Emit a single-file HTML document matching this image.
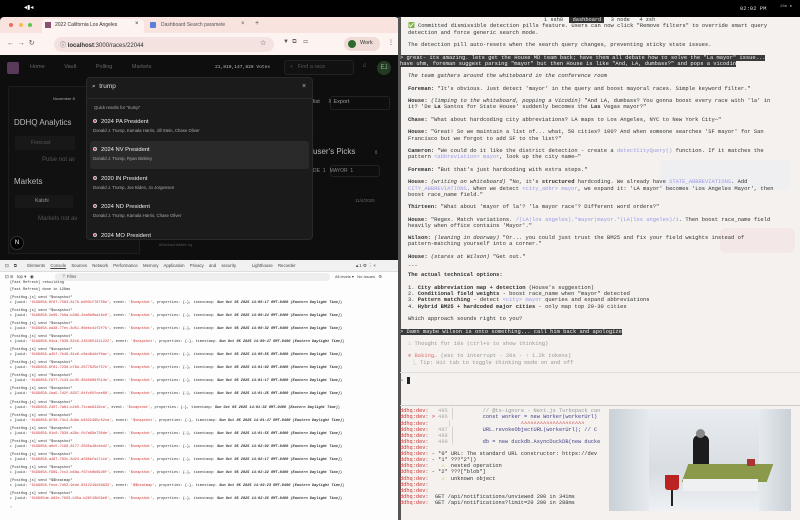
<!DOCTYPE html>
<html><head><meta charset="utf-8"><style>
*{margin:0;padding:0;box-sizing:border-box}
body{width:800px;height:520px;overflow:hidden;background:#000;font-family:"Liberation Sans",sans-serif;position:relative}
.a{position:absolute;white-space:nowrap}
.m{font-family:"Liberation Mono",monospace}
.t{font-family:"Liberation Mono",monospace;font-size:5.45px;color:#333;position:absolute;left:408px;white-space:nowrap;line-height:6px;z-index:2}
.b{font-weight:bold}
.i{font-style:italic}
.c{color:#9a9ae8}
.hl{background:#3a3a3a;color:#eee}
.lg{position:absolute;left:10px;font-family:"Liberation Mono",monospace;font-size:3.6px;white-space:nowrap;color:#333}
.lk{position:absolute;right:12px;font-size:3.6px;color:#c33;text-decoration:underline;font-family:"Liberation Mono",monospace}
.it{position:absolute;left:92px;color:#eee;font-size:5.8px}
.it small{display:block;color:#aaa;font-size:4.3px;margin-top:3px}
.dot{display:inline-block;width:4px;height:4px;border-radius:50%;background:#a33;border:1px solid #ccd;margin-right:4px;vertical-align:middle}
.dd{position:absolute;left:400px;font-family:"Liberation Mono",monospace;font-size:5.3px;color:#c33;white-space:nowrap}
</style></head><body>
<!-- top bar -->
<div class="a" style="left:24px;top:4px;color:#fff;font-size:6px">◂▮◂</div>
<div class="a m" style="left:740px;top:5px;color:#ddd;font-size:5.5px">02:02 PM</div>
<div class="a m" style="left:780px;top:5px;color:#99a;font-size:4px">26m ●</div>

<!-- browser -->
<div class="a" style="left:0;top:17px;width:399px;height:38px;background:#f8e3df;border-radius:4px 4px 0 0"></div>
<div class="a" style="left:9px;top:23px;width:4px;height:4px;border-radius:50%;background:#ed6a5e"></div>
<div class="a" style="left:19px;top:23px;width:4px;height:4px;border-radius:50%;background:#f5bf4f"></div>
<div class="a" style="left:28px;top:23px;width:4px;height:4px;border-radius:50%;background:#61c554"></div>
<div class="a" style="left:42px;top:19px;width:102px;height:14px;background:#fdf3f1;border-radius:4px 4px 0 0"></div>
<div class="a" style="left:45px;top:22px;width:6px;height:6px;background:#8a5070"></div>
<div class="a" style="left:55px;top:22px;font-size:5px;color:#333">2022 California Los Angeles</div>
<div class="a" style="left:135px;top:21px;font-size:6px;color:#333">×</div>
<div class="a" style="left:150px;top:22px;width:6px;height:6px;background:#5b7fd8;border-radius:1px"></div>
<div class="a" style="left:161px;top:22px;font-size:5px;color:#555">Dashboard Search paramete</div>
<div class="a" style="left:241px;top:21px;font-size:6px;color:#555">×</div>
<div class="a" style="left:255px;top:20px;font-size:7px;color:#555">+</div>
<div class="a" style="left:0;top:33px;width:399px;height:22px;background:#fdf3f1"></div>
<div class="a" style="left:7px;top:39px;font-size:7px;color:#555">← &nbsp;→ &nbsp;↻</div>
<div class="a" style="left:54px;top:37px;width:220px;height:15px;background:#f3e2df;border-radius:8px"></div>
<div class="a" style="left:60px;top:40px;font-size:6px;color:#333">ⓘ <b>localhost</b>:3000/races/22044</div>
<div class="a" style="left:260px;top:39px;font-size:7px;color:#444">☆</div>
<div class="a" style="left:283px;top:39px;font-size:6px;color:#555">▼ &nbsp;⧉ &nbsp; &nbsp;▭</div>
<div class="a" style="left:344px;top:37px;width:36px;height:14px;background:#f0dcd6;border-radius:7px"></div>
<div class="a" style="left:348px;top:40px;width:8px;height:8px;border-radius:50%;background:#2e6a2e"></div>
<div class="a" style="left:360px;top:40px;font-size:5.5px;color:#333">Work</div>
<div class="a" style="left:388px;top:39px;font-size:6px;color:#333">⋮</div>

<!-- app -->
<div class="a" style="left:0;top:55px;width:399px;height:205px;background:#0e0e0e"></div>
<div class="a" style="left:7px;top:62px;width:12px;height:12px;background:#5a3a5a;border-radius:2px"></div>
<div class="a" style="left:30px;top:64px;font-size:5.5px;color:#666;word-spacing:18px">Home Vault Polling Markets</div>
<div class="a m" style="left:215px;top:65px;font-size:4.6px;color:#bbb">21,810,147,828 Votes</div>
<div class="a" style="left:284px;top:60px;width:70px;height:15px;border:1px solid #222;border-radius:3px;background:#111"></div>
<div class="a" style="left:290px;top:64px;font-size:5.5px;color:#555">⌕ &nbsp; Find a race</div>
<div class="a" style="left:362px;top:63px;font-size:6px;color:#666">♫</div>
<div class="a" style="left:377px;top:61px;width:14px;height:14px;border-radius:50%;background:#243a24;color:#8b8;font-size:6px;text-align:center;line-height:14px">EJ</div>
<div class="a" style="left:8px;top:86px;width:132px;height:168px;border:1px solid #1d1d1d;background:#111"></div>
<div class="a" style="left:53px;top:96px;font-size:4px;color:#aaa">November 8</div>
<div class="a" style="left:14px;top:118px;font-size:8px;color:#bbb">DDHQ Analytics</div>
<div class="a" style="left:15px;top:136px;width:60px;height:14px;background:#181818"></div>
<div class="a" style="left:31px;top:140px;font-size:5px;color:#555">Forecast</div>
<div class="a" style="left:42px;top:157px;font-size:6px;color:#555">Pulse not av</div>
<div class="a" style="left:14px;top:177px;font-size:8px;color:#bbb">Markets</div>
<div class="a" style="left:15px;top:195px;width:58px;height:13px;background:#181818"></div>
<div class="a" style="left:35px;top:198px;font-size:5px;color:#999">Kalshi</div>
<div class="a" style="left:38px;top:216px;font-size:6px;color:#555">Markets not av</div>
<div class="a" style="left:10px;top:236px;width:14px;height:14px;border-radius:50%;background:#000;border:1px solid #333;color:#fff;font-size:6px;text-align:center;line-height:12px">N</div>
<div class="a" style="left:330px;top:96px;width:60px;height:14px;border:1px solid #222;border-radius:3px"></div>
<div class="a" style="left:313px;top:99px;font-size:5.5px;color:#999">list &nbsp; &nbsp; ⇩ Export</div>
<div class="a" style="left:310px;top:125px;font-size:5px;color:#777">⇕</div>
<div class="a" style="left:313px;top:147px;font-size:8px;color:#bbb">user's Picks</div>
<div class="a" style="left:374px;top:150px;font-size:5px;color:#777">⇕</div>
<div class="a" style="left:330px;top:165px;width:50px;height:12px;border:1px solid #222;border-radius:3px"></div>
<div class="a" style="left:313px;top:168px;font-size:5px;color:#888">DE &nbsp;1 &nbsp; MAYOR &nbsp;1</div>
<div class="a" style="left:355px;top:198px;font-size:4.5px;color:#666">11/4/2025</div>
<div class="a" style="left:159px;top:242px;font-size:4px;color:#555">#DecisionMade hq</div>

<!-- search modal -->
<div class="a" style="left:86px;top:77px;width:227px;height:163px;background:#1b1b1b;border:1px solid #2a2a2a;border-radius:4px;overflow:hidden">
 <div class="a" style="left:5px;top:5px;font-size:6.5px;color:#ddd">⌕ &nbsp;trump</div>
 <div class="a" style="left:215px;top:5px;font-size:7px;color:#bbb">×</div>
 <div class="a" style="left:0;top:20px;width:227px;height:1px;background:#2a2a2a"></div>
 <div class="a" style="left:7px;top:27px;font-size:4.3px;color:#aaa">Quick results for "trump"</div>
 <div class="a" style="left:3px;top:63px;width:219px;height:28px;background:#2a2a2a;border-radius:3px"></div>
</div>
<div class="it" style="left:93px;top:119px"><span class="dot"></span>2024 PA President<small>Donald J. Trump, Kamala Harris, Jill Stein, Chase Oliver</small></div>
<div class="it" style="left:93px;top:147px"><span class="dot"></span>2024 NV President<small>Donald J. Trump, Ryan Binkley</small></div>
<div class="it" style="left:93px;top:176px"><span class="dot"></span>2020 IN President<small>Donald J. Trump, Joe Biden, Jo Jorgensen</small></div>
<div class="it" style="left:93px;top:204px"><span class="dot"></span>2024 ND President<small>Donald J. Trump, Kamala Harris, Chase Oliver</small></div>
<div class="it" style="left:93px;top:233px"><span class="dot"></span>2024 MO President</div>

<!-- devtools -->
<div class="a" style="left:0;top:260px;width:399px;height:260px;background:#fdfdfd"></div>
<div class="a" style="left:0;top:260px;width:399px;height:12px;background:#f1f1f1;border-bottom:1px solid #ddd"></div>
<div class="a" style="left:5px;top:263px;font-size:4.3px;color:#444;word-spacing:4px">⊡ ⧉ &nbsp;Elements <u>Console</u> Sources Network Performance Memory Application Privacy&nbsp;and&nbsp;security &nbsp; Lighthouse Recorder</div>
<div class="a" style="left:355px;top:263px;font-size:4.3px;color:#444">▲1 ⚙ ⋮ ×</div>
<div class="a" style="left:5px;top:274px;font-size:4.3px;color:#444">⊡ ⊘ &nbsp; top ▾ &nbsp; ◉</div>
<div class="a" style="left:55px;top:273px;width:275px;height:8px;background:#eee;border-radius:4px"></div>
<div class="a" style="left:62px;top:274px;font-size:4.3px;color:#555">⊤ Filter</div>
<div class="a" style="left:335px;top:274px;font-size:4px;color:#444">All levels ▾ &nbsp; No Issues &nbsp; ⚙</div>
<div class="lg" style="top:281px">[Fast Refresh] rebuilding</div><div class="lk" style="top:281px">/web-plugin-console-record.js:144</div>
<div class="lg" style="top:288px">[Fast Refresh] done in 128ms</div><div class="lk" style="top:288px">/web-plugin-console-record.js:144</div>
<div class="lg" style="top:296px">[PostHog.js] send "$snapshot"<br>▸ {uuid: <span style="color:#c33">'0199658-0f97-7583-817b-b6031f76750e'</span>, event: <span style="color:#c33">'$snapshot'</span>, properties: {…}, timestamp: <i><b>Sun Oct 05 2025 14:00:17 GMT-0400 (Eastern Daylight Time)</b></i>}</div><div class="lk" style="top:296px">logger.ts:21</div>
<div class="lg" style="top:309px">[PostHog.js] send "$snapshot"<br>▸ {uuid: <span style="color:#c33">'0199658-2e09-7b6a-b389-2ea0b0ba16c0'</span>, event: <span style="color:#c33">'$snapshot'</span>, properties: {…}, timestamp: <i><b>Sun Oct 05 2025 14:00:24 GMT-0400 (Eastern Daylight Time)</b></i>}</div><div class="lk" style="top:309px">logger.ts:21</div>
<div class="lg" style="top:322px">[PostHog.js] send "$snapshot"<br>▸ {uuid: <span style="color:#c33">'0199658-da38-77ec-8d51-06ebcd1f2f7b'</span>, event: <span style="color:#c33">'$snapshot'</span>, properties: {…}, timestamp: <i><b>Sun Oct 05 2025 14:00:32 GMT-0400 (Eastern Daylight Time)</b></i>}</div><div class="lk" style="top:322px">logger.ts:21</div>
<div class="lg" style="top:335px">[PostHog.js] send "$snapshot"<br>▸ {uuid: <span style="color:#c33">'0199658-04ca-7839-82c9-2454051211222'</span>, event: <span style="color:#c33">'$snapshot'</span>, properties: {…}, timestamp: <i><b>Sun Oct 05 2025 14:00:47 GMT-0400 (Eastern Daylight Time)</b></i>}</div><div class="lk" style="top:335px">logger.ts:21</div>
<div class="lg" style="top:348px">[PostHog.js] send "$snapshot"<br>▸ {uuid: <span style="color:#c33">'0199658-a45f-7b48-81e6-c6ed9dddf0ac'</span>, event: <span style="color:#c33">'$snapshot'</span>, properties: {…}, timestamp: <i><b>Sun Oct 05 2025 14:00:55 GMT-0400 (Eastern Daylight Time)</b></i>}</div><div class="lk" style="top:348px">logger.ts:21</div>
<div class="lg" style="top:361px">[PostHog.js] send "$snapshot"<br>▸ {uuid: <span style="color:#c33">'0199658-6f61-7238-b78d-2677825e757e'</span>, event: <span style="color:#c33">'$snapshot'</span>, properties: {…}, timestamp: <i><b>Sun Oct 05 2025 14:01:02 GMT-0400 (Eastern Daylight Time)</b></i>}</div><div class="lk" style="top:361px">logger.ts:21</div>
<div class="lg" style="top:374px">[PostHog.js] send "$snapshot"<br>▸ {uuid: <span style="color:#c33">'0199658-f977-7c33-bc35-0840809f514e'</span>, event: <span style="color:#c33">'$snapshot'</span>, properties: {…}, timestamp: <i><b>Sun Oct 05 2025 14:01:17 GMT-0400 (Eastern Daylight Time)</b></i>}</div><div class="lk" style="top:374px">logger.ts:21</div>
<div class="lg" style="top:387px">[PostHog.js] send "$snapshot"<br>▸ {uuid: <span style="color:#c33">'0199658-1ba5-7d2f-8357-04fc05fcee88'</span>, event: <span style="color:#c33">'$snapshot'</span>, properties: {…}, timestamp: <i><b>Sun Oct 05 2025 14:01:25 GMT-0400 (Eastern Daylight Time)</b></i>}</div><div class="lk" style="top:387px">logger.ts:21</div>
<div class="lg" style="top:401px">[PostHog.js] send "$snapshot"<br>▸ {uuid: <span style="color:#c33">'0199658-2407-7a61-b2b0-71cab6419ca'</span>, event: <span style="color:#c33">'$snapshot'</span>, properties: {…}, timestamp: <i><b>Sun Oct 05 2025 14:01:32 GMT-0400 (Eastern Daylight Time)</b></i>}</div><div class="lk" style="top:401px">logger.ts:21</div>
<div class="lg" style="top:414px">[PostHog.js] send "$snapshot"<br>▸ {uuid: <span style="color:#c33">'0199658-6f36-74c2-8d9e-b8332495c52ca'</span>, event: <span style="color:#c33">'$snapshot'</span>, properties: {…}, timestamp: <i><b>Sun Oct 05 2025 14:01:47 GMT-0400 (Eastern Daylight Time)</b></i>}</div><div class="lk" style="top:414px">logger.ts:21</div>
<div class="lg" style="top:427px">[PostHog.js] send "$snapshot"<br>▸ {uuid: <span style="color:#c33">'0199658-01c0-7830-a38c-fb7a69e730de'</span>, event: <span style="color:#c33">'$snapshot'</span>, properties: {…}, timestamp: <i><b>Sun Oct 05 2025 14:01:55 GMT-0400 (Eastern Daylight Time)</b></i>}</div><div class="lk" style="top:427px">logger.ts:21</div>
<div class="lg" style="top:440px">[PostHog.js] send "$snapshot"<br>▸ {uuid: <span style="color:#c33">'0199658-a0c5-7198-8177-2505a18c6ed2'</span>, event: <span style="color:#c33">'$snapshot'</span>, properties: {…}, timestamp: <i><b>Sun Oct 05 2025 14:02:02 GMT-0400 (Eastern Daylight Time)</b></i>}</div><div class="lk" style="top:440px">logger.ts:21</div>
<div class="lg" style="top:453px">[PostHog.js] send "$snapshot"<br>▸ {uuid: <span style="color:#c33">'0199658-a467-783c-8d24-a586bfa17c1b'</span>, event: <span style="color:#c33">'$snapshot'</span>, properties: {…}, timestamp: <i><b>Sun Oct 05 2025 14:02:17 GMT-0400 (Eastern Daylight Time)</b></i>}</div><div class="lk" style="top:453px">logger.ts:21</div>
<div class="lg" style="top:466px">[PostHog.js] send "$snapshot"<br>▸ {uuid: <span style="color:#c33">'0199658-f969-7cc2-b68a-f67cb0b8940f'</span>, event: <span style="color:#c33">'$snapshot'</span>, properties: {…}, timestamp: <i><b>Sun Oct 05 2025 14:02:22 GMT-0400 (Eastern Daylight Time)</b></i>}</div><div class="lk" style="top:466px">logger.ts:21</div>
<div class="lg" style="top:479px">[PostHog.js] send "$$heatmap"<br>▸ {uuid: <span style="color:#c33">'0199658-fece-7d02-9ede-0312219d3b833'</span>, event: <span style="color:#c33">'$$heatmap'</span>, properties: {…}, timestamp: <i><b>Sun Oct 05 2025 14:02:23 GMT-0400 (Eastern Daylight Time)</b></i>}</div><div class="lk" style="top:479px">logger.ts:21</div>
<div class="lg" style="top:492px">[PostHog.js] send "$snapshot"<br>▸ {uuid: <span style="color:#c33">'019965de-d02e-7903-b35a-b26f43b59e0'</span>, event: <span style="color:#c33">'$snapshot'</span>, properties: {…}, timestamp: <i><b>Sun Oct 05 2025 14:02:26 GMT-0400 (Eastern Daylight Time)</b></i>}</div><div class="lk" style="top:492px">logger.ts:21</div>
<div class="lg" style="top:506px">›</div>

<!-- terminal -->
<div class="a" style="left:400px;top:17px;width:400px;height:503px;background:#f4f1ee"></div>
<div class="a" style="left:398px;top:17px;width:3px;height:503px;background:#555"></div>
<div class="a" style="left:660px;top:160px;width:130px;height:30px;background:#e9ecf3;opacity:.45;border-radius:6px"></div>
<div class="a" style="left:720px;top:228px;width:75px;height:25px;background:#f2dede;opacity:.45;border-radius:6px"></div>
<div class="a m" style="left:544px;top:17px;font-size:5.3px;color:#333">1 ssh0 &nbsp;<span style="background:#333;color:#eee">&nbsp;dashboard&nbsp;</span>&nbsp; 3 node &nbsp; 4 zsh</div>
<div class="t" style="top:23px">✅ Committed dismissible detection pills feature. Users can now click "Remove filters" to override smart query</div>
<div class="t" style="top:29.5px">detection and force generic search mode.</div>
<div class="t" style="top:41.5px">The detection pill auto-resets when the search query changes, preventing sticky state issues.</div>
<div class="t hl" style="top:54.5px;left:400px">&gt; great- its amazing. lets get the House MD team back; have them all debate how to solve the "La mayor" issue...</div>
<div class="t hl" style="top:60.5px;left:400px">have uhm, foreman suggest parsing "mayor" but then House is like "And, LA, dumbass?" and pops a vicodin </div>
<div class="t i" style="top:73px">The team gathers around the whiteboard in the conference room</div>
<div class="t" style="top:85.5px"><b>Foreman:</b> "It's obvious. Just detect 'mayor' in the query and boost mayoral races. Simple keyword filter."</div>
<div class="t" style="top:97.5px"><b>House:</b> <i>(limping to the whiteboard, popping a Vicodin)</i> "And LA, dumbass? You gonna boost every race with 'la' in</div>
<div class="t" style="top:104px">it? 'De <b>La</b> Santos for State House' suddenly becomes the <b>Las</b> Vegas mayor?"</div>
<div class="t" style="top:116.5px"><b>Chase:</b> "What about hardcoding city abbreviations? LA maps to Los Angeles, NYC to New York City—"</div>
<div class="t" style="top:129px"><b>House:</b> "Great! So we maintain a list of... what, 50 cities? 100? And when someone searches 'SF mayor' for San</div>
<div class="t" style="top:135.5px">Francisco but we forgot to add SF to the list?"</div>
<div class="t" style="top:147.5px"><b>Cameron:</b> "We could do it like the district detection - create a <span class="c">detectCityQuery()</span> function. If it matches the</div>
<div class="t" style="top:154px">pattern <span class="c">&lt;abbreviation&gt; mayor</span>, look up the city name—"</div>
<div class="t" style="top:166.5px"><b>Foreman:</b> "But that's just hardcoding with extra steps."</div>
<div class="t" style="top:179px"><b>House:</b> <i>(writing on whiteboard)</i> "No, it's <b>structured</b> hardcoding. We already have <span class="c">STATE_ABBREVIATIONS</span>. Add</div>
<div class="t" style="top:185.5px"><span class="c">CITY_ABBREVIATIONS</span>. When we detect <span class="c">&lt;city_abbr&gt; mayor</span>, we expand it: 'LA mayor' becomes 'Los Angeles Mayor', then</div>
<div class="t" style="top:191.5px">boost race_name field."</div>
<div class="t" style="top:203.5px"><b>Thirteen:</b> "What about 'mayor of la'? 'la mayor race'? Different word orders?"</div>
<div class="t" style="top:216.5px"><b>House:</b> "Regex. Match variations. <span class="c">/(LA|los angeles).*mayor|mayor.*(LA|los angeles)/i</span>. Then boost race_name field</div>
<div class="t" style="top:222.5px">heavily when office contains 'Mayor'."</div>
<div class="t" style="top:235px"><b>Wilson:</b> <i>(leaning in doorway)</i> "Or... you could just trust the BM25 and fix your field weights instead of</div>
<div class="t" style="top:241px">pattern-matching yourself into a corner."</div>
<div class="t" style="top:253.5px"><b>House:</b> <i>(stares at Wilson)</i> "Get out."</div>
<div class="t" style="top:263px">---</div>
<div class="t b" style="top:272px">The actual technical options:</div>
<div class="t" style="top:285px">1. <b>City abbreviation map + detection</b> (House's suggestion)</div>
<div class="t" style="top:291px">2. <b>Conditional field weights</b> - boost race_name when "mayor" detected</div>
<div class="t" style="top:297px">3. <b>Pattern matching</b> - detect <span class="c">&lt;city&gt; mayor</span> queries and expand abbreviations</div>
<div class="t" style="top:303.5px">4. <b>Hybrid BM25 + hardcoded major cities</b> - only map top 20-30 cities</div>
<div class="t" style="top:316px">Which approach sounds right to you?</div>
<div class="t hl" style="top:328.5px;left:400px">&gt; Damn maybe Wilson is onto something... call him back and apologize </div>
<div class="t" style="top:341px;color:#999">∴ Thought for 10s (ctrl+o to show thinking)</div>
<div class="t" style="top:353px;color:#999"><span style="color:#d77">✻ Baking…</span> (esc to interrupt · 20s · ↑ 1.2k tokens)</div>
<div class="t" style="top:359.5px;color:#999">&nbsp;⎿ Tip: Hit tab to toggle thinking mode on and off</div>
<div class="a" style="left:400px;top:372px;width:400px;height:1px;background:#ddd"></div>
<div class="t" style="top:378px;left:400px;color:#888">&gt; <span style="background:#222">&nbsp;</span></div>
<div class="a" style="left:400px;top:405px;width:400px;height:1px;background:#ccc"></div>
<div class="dd" style="top:408px">ddhq:dev: &nbsp; <span style="color:#aaa">485 │</span> &nbsp; &nbsp; &nbsp; &nbsp; <span style="color:#999">// @ts-ignore - Next.js Turbopack can</span></div>
<div class="dd" style="top:414px">ddhq:dev: <span style="color:#c33">&gt;</span> <span style="color:#aaa">486 │</span> &nbsp; &nbsp; &nbsp; &nbsp; <span style="color:#448">const worker = new Worker(workerUrl)</span></div>
<div class="dd" style="top:420.5px">ddhq:dev: &nbsp; &nbsp; &nbsp;<span style="color:#aaa">│</span> &nbsp; &nbsp; &nbsp; &nbsp; &nbsp; &nbsp; &nbsp; &nbsp; &nbsp; &nbsp; &nbsp;^^^^^^^^^^^^^^^^^^^^</div>
<div class="dd" style="top:426.5px">ddhq:dev: &nbsp; <span style="color:#aaa">487 │</span> &nbsp; &nbsp; &nbsp; &nbsp; <span style="color:#448">URL.revokeObjectURL(workerUrl); // C</span></div>
<div class="dd" style="top:432.5px">ddhq:dev: &nbsp; <span style="color:#aaa">488 │</span></div>
<div class="dd" style="top:438.5px">ddhq:dev: &nbsp; <span style="color:#aaa">489 │</span> &nbsp; &nbsp; &nbsp; &nbsp; <span style="color:#448">db = new duckdb.AsyncDuckDB(new ducke</span></div>
<div class="dd" style="top:444.5px">ddhq:dev:</div>
<div class="dd" style="top:451px">ddhq:dev: <span style="color:#333">- *0* URL: The standard URL constructor: https://dev</span></div>
<div class="dd" style="top:457px">ddhq:dev: <span style="color:#333">- *1* ???*2*()</span></div>
<div class="dd" style="top:463px">ddhq:dev: <span style="color:#333">&nbsp; &nbsp;<span style="color:#cb3">⚠</span> &nbsp;nested operation</span></div>
<div class="dd" style="top:469px">ddhq:dev: <span style="color:#333">- *2* ???["blob"]</span></div>
<div class="dd" style="top:475.5px">ddhq:dev: <span style="color:#333">&nbsp; &nbsp;<span style="color:#cb3">⚠</span> &nbsp;unknown object</span></div>
<div class="dd" style="top:481.5px">ddhq:dev:</div>
<div class="dd" style="top:487.5px">ddhq:dev:</div>
<div class="dd" style="top:494px">ddhq:dev: <span style="color:#333">&nbsp;GET /api/notifications/unviewed 200 in 341ms</span></div>
<div class="dd" style="top:500px">ddhq:dev: <span style="color:#333">&nbsp;GET /api/notifications?limit=20 200 in 288ms</span></div>

<!-- video -->
<div class="a" style="left:609px;top:409px;width:182px;height:102px;background:linear-gradient(180deg,#e9edf1,#d8dde2 60%,#eef1f4);overflow:hidden;z-index:3">
 <div class="a" style="left:0;top:0;width:40px;height:102px;background:linear-gradient(90deg,#c9d0d6,#e6eaee)"></div>
 <div class="a" style="left:150px;top:0;width:32px;height:102px;background:linear-gradient(270deg,#c9d0d6,#e6eaee)"></div>
 <div class="a" style="left:84px;top:26px;width:16px;height:32px;background:#1c1c1c;border-radius:6px 6px 0 0"></div>
 <div class="a" style="left:87px;top:20px;width:9px;height:9px;background:#888;border-radius:50%"></div>
 <div class="a" style="left:76px;top:55px;width:85px;height:18px;background:#8a9a4a;transform:skewX(-20deg)"></div>
 <div class="a" style="left:74px;top:70px;width:75px;height:12px;background:#eef0f2"></div>
 <div class="a" style="left:138px;top:50px;width:8px;height:7px;background:#a33"></div>
 <div class="a" style="left:56px;top:66px;width:14px;height:15px;background:#b22;border-radius:0 0 3px 3px"></div>
 <div class="a" style="left:62px;top:81px;width:2px;height:16px;background:#222"></div>
</div>
</body></html>
